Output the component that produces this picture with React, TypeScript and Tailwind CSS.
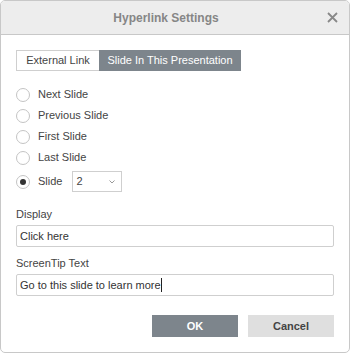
import React from "react";

const font = { fontFamily: '"Liberation Sans", Arial, sans-serif' };

function Radio({ label, checked }: { label: string; checked?: boolean }) {
  return (
    <div className="flex items-center h-[21px]">
      <span className="w-[14px] h-[14px] rounded-full border border-[#c4c4c4] bg-white flex items-center justify-center">
        {checked && <span className="w-[6px] h-[6px] rounded-full bg-[#333]" />}
      </span>
      <span className="ml-[8px] text-[11px] text-[#444]">{label}</span>
    </div>
  );
}

export default function App() {
  return (
    <div style={font} className="w-[350px] h-[353px] bg-white">
      <div className="w-[350px] h-[353px] border border-[#c8c8c8] rounded-[5px] overflow-hidden flex flex-col bg-white">
        {/* header */}
        <div className="h-[34px] shrink-0 bg-[#ededed] border-b border-[#c8c8c8] relative flex items-center justify-center pr-[18px]">
          <span className="text-[12px] font-bold text-[#868686]">Hyperlink Settings</span>
          <svg className="absolute right-[11px] top-[11px]" width="11" height="11" viewBox="0 0 11 11">
            <path d="M1 1 L10 10 M10 1 L1 10" stroke="#888" strokeWidth="1.8" />
          </svg>
        </div>

        <div className="px-[15px] flex flex-col">
          {/* tabs */}
          <div className="flex mt-[15px] h-[21px]">
            <div className="w-[83px] border border-[#cfcfcf] border-r-0 flex items-center justify-center text-[11px] text-[#444]">
              External Link
            </div>
            <div className="w-[142px] bg-[#7d858c] flex items-center justify-center text-[11px] text-white">
              Slide In This Presentation
            </div>
          </div>

          {/* radios */}
          <div className="mt-[13px] flex flex-col">
            <Radio label="Next Slide" />
            <Radio label="Previous Slide" />
            <Radio label="First Slide" />
            <Radio label="Last Slide" />
            <div className="flex items-center mt-[3px] h-[21px]">
              <span className="w-[14px] h-[14px] rounded-full border border-[#c4c4c4] bg-white flex items-center justify-center">
                <span className="w-[6px] h-[6px] rounded-full bg-[#333]" />
              </span>
              <span className="ml-[8px] text-[11px] text-[#444]">Slide</span>
              <div className="ml-[10px] w-[50px] h-[21px] border border-[#cfcfcf] flex items-center justify-between pl-[3px] pr-[6px]">
                <span className="text-[11px] text-[#444]">2</span>
                <svg width="6" height="4" viewBox="0 0 6 4">
                  <path d="M0.5 0.5 L3 3 L5.5 0.5" stroke="#999" strokeWidth="1" fill="none" />
                </svg>
              </div>
            </div>
          </div>

          {/* display */}
          <div className="mt-[15px] h-[14px] flex items-center text-[11px] text-[#444]">Display</div>
          <div className="mt-[4px] w-[318px] h-[22px] border border-[#cfcfcf] rounded-[2px] flex items-center px-[3px] text-[11px] text-[#333]">
            Click here
          </div>

          <div className="mt-[9px] h-[14px] flex items-center text-[11px] text-[#444]">ScreenTip Text</div>
          <div className="mt-[4px] w-[318px] h-[22px] border border-[#cfcfcf] rounded-[2px] flex items-center px-[3px] text-[11px] text-[#333]">
            Go to this slide to learn more
            <span className="w-px h-[14px] bg-[#222]" />
          </div>

          {/* buttons */}
          <div className="mt-[19px] flex justify-end gap-[10px]">
            <button className="w-[86px] h-[22px] bg-[#7d858c] text-white text-[11px] font-bold">OK</button>
            <button className="w-[86px] h-[22px] bg-[#dfdfdf] text-[#444] text-[11px] font-bold">Cancel</button>
          </div>
        </div>
      </div>
    </div>
  );
}
